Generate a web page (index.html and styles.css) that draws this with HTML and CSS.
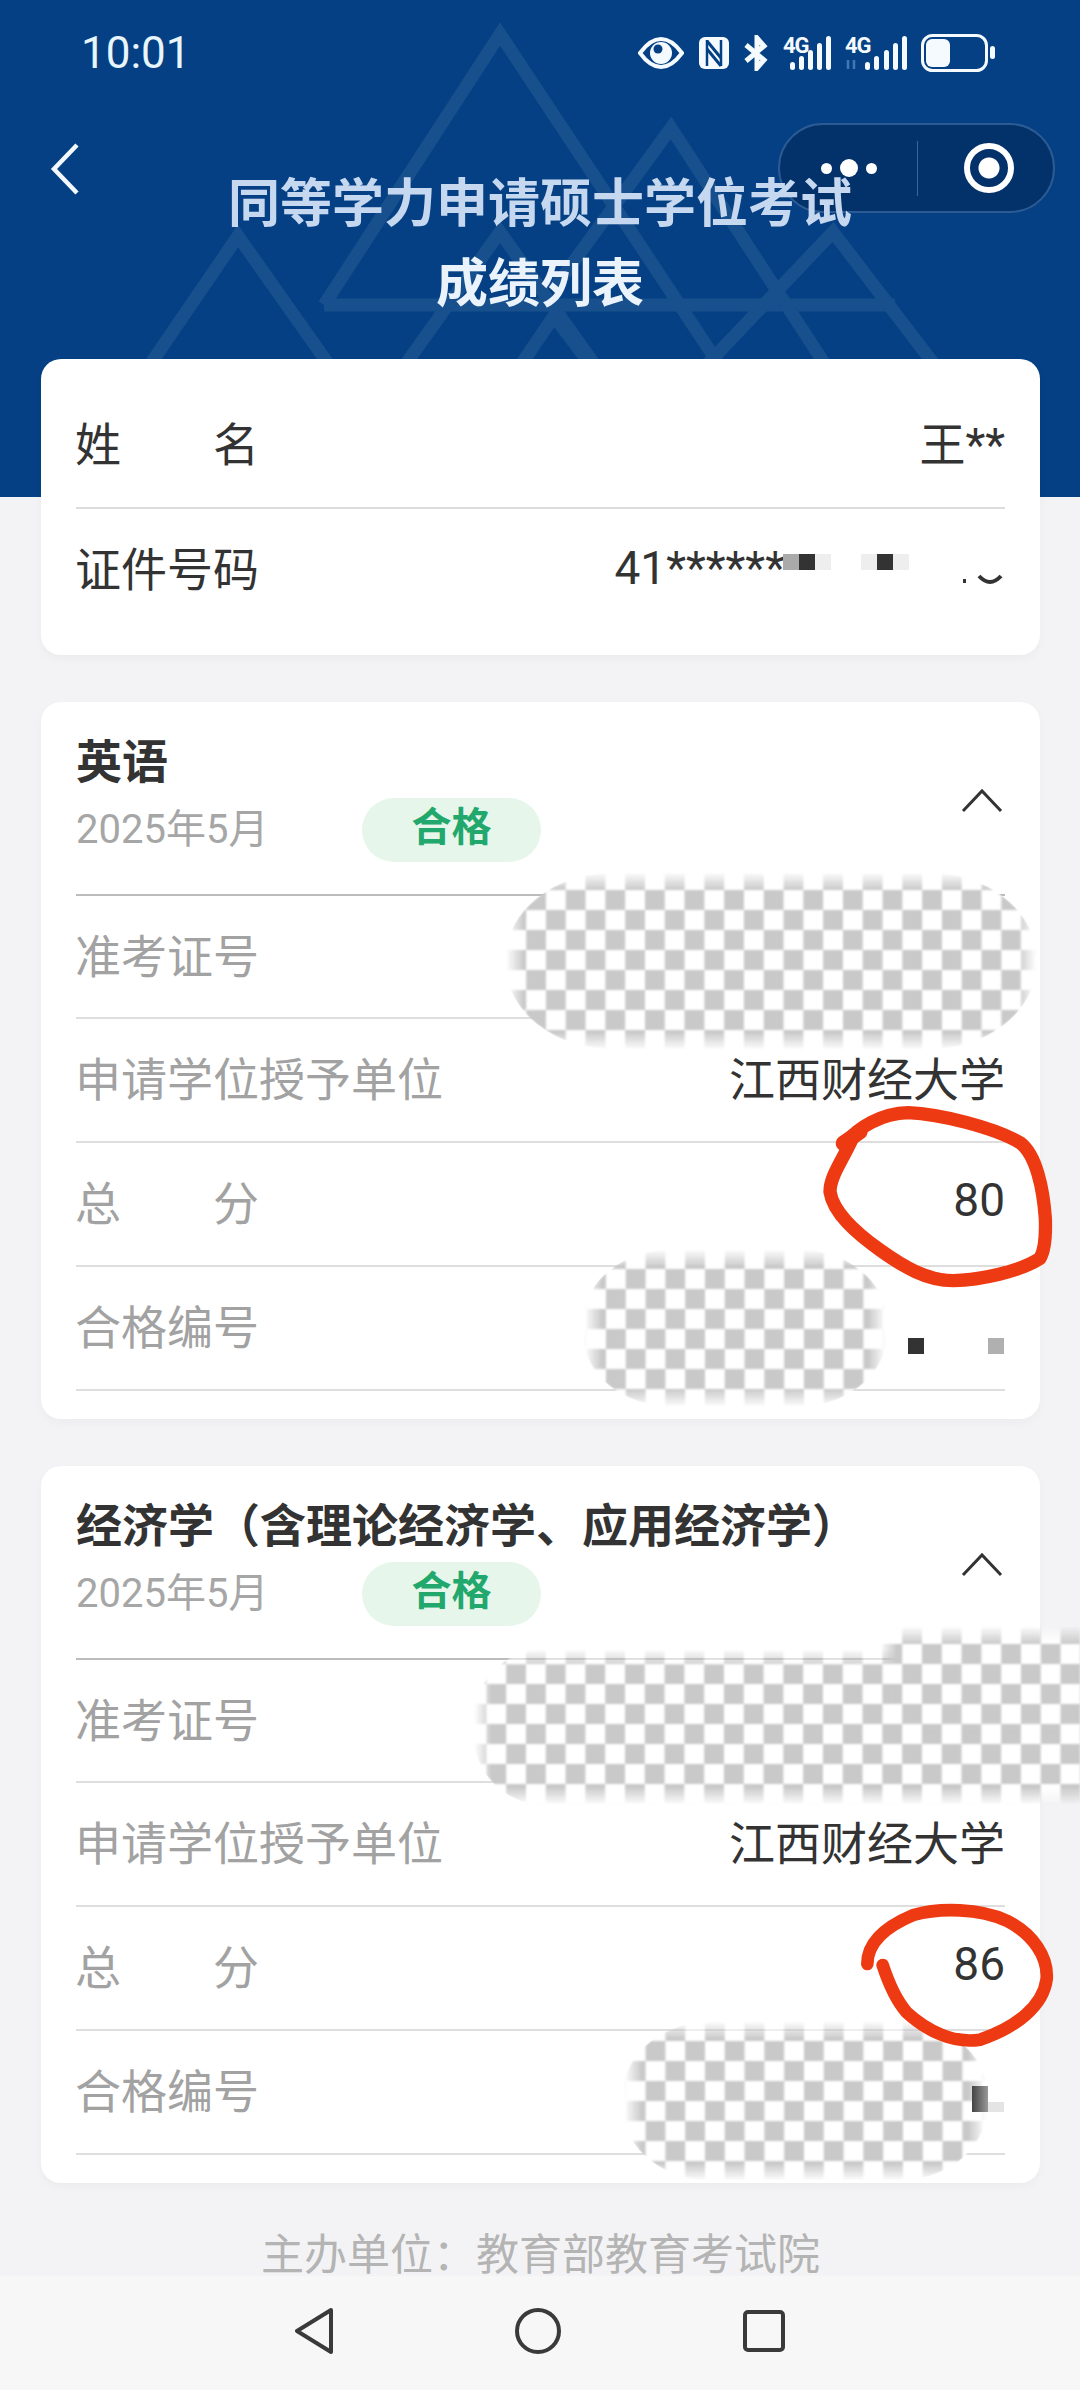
FILE: index.html
```html
<!DOCTYPE html>
<html lang="zh-CN">
<head>
    <meta charset="UTF-8">
    <meta name="viewport" content="width=device-width, initial-scale=1.0">
    <title>成绩列表</title>
    <link rel="stylesheet" href="styles.css">
</head>
<body>
    <div class="page">
        <header class="banner">
            <svg class="banner-lines" viewBox="0 0 1080 497" fill="none" stroke="#17508c" stroke-width="13">
                <path d="M324 305 L500 34 L724 372"/>
                <path d="M324 305 H895"/>
                <path d="M553 290 L671 128 L830 372"/>
                <path d="M145 372 L238 236 L334 372"/>
                <path d="M400 372 L500 232 L600 372"/>
                <path d="M516 372 L554 316 L596 372"/>
                <path d="M700 372 L833 232 L940 372"/>
            </svg>
            <div class="status-bar">
                <span class="clock">10:01</span>
                <div class="status-icons">
                    <svg width="46" height="32" viewBox="0 0 46 32">
                        <path d="M2 16 C10 5 17 2 23 2 C29 2 36 5 44 16 C36 27 29 30 23 30 C17 30 10 27 2 16 Z" fill="none" stroke="#f4fafd" stroke-width="4"/>
                        <circle cx="23" cy="16" r="11" fill="#f4fafd"/>
                        <circle cx="20" cy="12" r="4.500" fill="#044083"/>
                    </svg>
                    <svg width="32" height="34" viewBox="0 0 32 34">
                        <rect x="1" y="1" width="30" height="32" rx="6" fill="#f4fafd"/>
                        <path d="M9 4 V30 M23 4 V30" stroke="#044083" stroke-width="2.500"/>
                        <path d="M9 5 L23 22 M9 13 L23 30" stroke="#044083" stroke-width="3"/>
                    </svg>
                    <svg width="25" height="36" viewBox="0 0 25 36" fill="none" stroke="#f4fafd" stroke-width="5">
                        <path d="M2 10 L20 25 L13 33 V3 L20 11 L2 26"/>
                    </svg>
                    <svg class="signal" width="48" height="34" viewBox="0 0 48 34">
                        <text x="0" y="17" class="signal-label">4G</text>
                        <g fill="#f4fafd">
                            <rect x="7" y="26" width="5" height="8" rx="2.500"/>
                            <rect x="16" y="20" width="5" height="14" rx="2.500"/>
                            <rect x="25" y="14" width="5" height="20" rx="2.500"/>
                            <rect x="34" y="7" width="5" height="27" rx="2.500"/>
                            <rect x="43" y="0" width="5" height="34" rx="2.500"/>
                        </g>
                    </svg>
                    <svg class="signal" width="62" height="34" viewBox="0 0 62 34">
                        <text x="0" y="17" class="signal-label">4G</text>
                        <path d="M3 33 V24 M9 24 V33" stroke="#3f78b5" stroke-width="2.500"/>
                        <g fill="#f4fafd">
                            <rect x="20" y="26" width="5" height="8" rx="2.500"/>
                            <rect x="29" y="20" width="5" height="14" rx="2.500"/>
                            <rect x="39" y="14" width="5" height="20" rx="2.500"/>
                            <rect x="48" y="7" width="5" height="27" rx="2.500"/>
                            <rect x="57" y="0" width="5" height="34" rx="2.500"/>
                        </g>
                    </svg>
                    <svg width="75" height="38" viewBox="0 0 75 38">
                        <rect x="1.500" y="1.500" width="64" height="35" rx="10" fill="none" stroke="#f4fafd" stroke-width="3"/>
                        <rect x="5" y="5" width="24" height="28" rx="6" fill="#f4fafd"/>
                        <rect x="69" y="12" width="5" height="13" rx="2.500" fill="#f4fafd"/>
                    </svg>
                </div>
            </div>
            <div class="nav-bar">
                <svg class="back" width="30" height="52" viewBox="0 0 30 52" fill="none" stroke="#f2f8fc" stroke-width="4.500">
                    <path d="M27 2 L4 26 L27 50"/>
                </svg>
                <div class="capsule">
                    <div class="capsule-dots"><i></i><b></b><i></i></div>
                    <div class="capsule-target"></div>
                </div>
            </div>
            <h1 class="page-title">
                <span class="title-main">同等学力申请硕士学位考试</span>
                <span class="title-sub">成绩列表</span>
            </h1>
        </header>

        <main class="content">
            <section class="card card-person">
                <div class="row">
                    <span class="label label-wide">姓名</span>
                    <span class="value">王**</span>
                </div>
                <div class="row">
                    <span class="label">证件号码</span>
                    <span class="value id-value">
                        41******
                        <span class="id-blocks">
                            <i class="bl-mid"></i><i class="bl-dark"></i><i class="bl-pale"></i>
                            <i class="bl-gap"></i>
                            <i class="bl-pale"></i><i class="bl-dark"></i><i class="bl-pale"></i>
                        </span>
                        <svg width="44" height="30" viewBox="0 0 44 30" fill="none" stroke="#333">
                            <path d="M2 26 h3" stroke-width="4"/>
                            <path d="M18 21 Q29 33 40 21" stroke-width="4"/>
                        </svg>
                    </span>
                </div>
            </section>

            <section class="card card-score">
                <div class="score-head">
                    <div>
                        <h2 class="subject">英语</h2>
                        <div class="meta">
                            <span class="date">2025年5月</span>
                            <span class="pill">合格</span>
                        </div>
                    </div>
                    <svg class="chevron" width="42" height="25" viewBox="0 0 42 25" fill="none" stroke="#333" stroke-width="3">
                        <path d="M2 23 L21 3 L40 23"/>
                    </svg>
                </div>
                <div class="row muted first"><span class="label">准考证号</span></div>
                <div class="row muted"><span class="label">申请学位授予单位</span><span class="value">江西财经大学</span></div>
                <div class="row muted"><span class="label label-wide">总分</span><span class="value">80</span></div>
                <div class="row muted"><span class="label">合格编号</span></div>

                <div class="mosaic m1"></div>
                <div class="mosaic m2"></div>
                <i class="speck speck-dark s1"></i>
                <i class="speck speck-gray s2"></i>
                <svg class="ink ink1" viewBox="0 0 900 930" fill="none" stroke="#ee3a12" stroke-width="40" stroke-linecap="round" stroke-linejoin="round">
                    <path d="M200 155 C235 115 300 70 385 68 C480 72 640 112 720 158 C770 195 790 300 796 385 C798 440 795 480 780 505 C720 545 600 570 520 572 C440 572 370 530 300 480 C230 430 160 370 150 305 C150 260 185 215 215 150"/>
                    <path d="M190 160 L240 125" stroke-width="46"/>
                </svg>
            </section>

            <section class="card card-score">
                <div class="score-head">
                    <div>
                        <h2 class="subject">经济学（含理论经济学、应用经济学）</h2>
                        <div class="meta">
                            <span class="date">2025年5月</span>
                            <span class="pill">合格</span>
                        </div>
                    </div>
                    <svg class="chevron" width="42" height="25" viewBox="0 0 42 25" fill="none" stroke="#333" stroke-width="3">
                        <path d="M2 23 L21 3 L40 23"/>
                    </svg>
                </div>
                <div class="row muted first"><span class="label">准考证号</span></div>
                <div class="row muted"><span class="label">申请学位授予单位</span><span class="value">江西财经大学</span></div>
                <div class="row muted"><span class="label label-wide">总分</span><span class="value">86</span></div>
                <div class="row muted"><span class="label">合格编号</span></div>

                <div class="mosaic m3"></div>
                <div class="mosaic m3-top"></div>
                <div class="mosaic m4"></div>
                <i class="speck speck-fade s3"></i>
                <i class="speck speck-pale s4"></i>
                <svg class="ink ink2" viewBox="0 0 900 930" fill="none" stroke="#ee3a12" stroke-width="38" stroke-linecap="round" stroke-linejoin="round">
                    <path d="M262 255 C262 200 300 150 400 108 C480 85 600 88 680 125 C760 165 805 235 800 300 C790 380 710 445 600 482 C520 495 440 455 380 400 C345 360 325 310 308 258"/>
                </svg>
            </section>

            <footer class="sponsor">主办单位：教育部教育考试院</footer>
        </main>

        <nav class="system-nav">
            <svg width="40" height="48" viewBox="0 0 40 48" fill="none" stroke="#3a3a3a" stroke-width="4" stroke-linejoin="round">
                <path d="M36 3 L2 24 L36 45 Z"/>
            </svg>
            <svg width="46" height="46" viewBox="0 0 46 46" fill="none" stroke="#3a3a3a" stroke-width="4">
                <circle cx="23" cy="23" r="21"/>
            </svg>
            <svg class="nav-square" width="42" height="42" viewBox="0 0 42 42" fill="none" stroke="#3a3a3a" stroke-width="4">
                <rect x="2" y="2" width="38" height="38" rx="3"/>
            </svg>
        </nav>
    </div>
</body>
</html>
```

FILE: styles.css
```css
* {
    box-sizing: border-box;
}
body {
    margin: 0;
    padding: 0;
    font-family: Roboto, "Noto Sans CJK SC", sans-serif;
    color: #333;
    background-color: #f3f3f5;
}
.page {
    position: relative;
    width: 1080px;
    height: 2390px;
    overflow: hidden;
}
.banner {
    position: relative;
    height: 497px;
    background-color: #044083;
}
.banner-lines {
    position: absolute;
    top: 0;
    left: 0;
    width: 1080px;
    height: 497px;
}
.status-bar {
    position: relative;
    display: flex;
    justify-content: space-between;
    align-items: center;
    height: 106px;
    padding: 0 84px 0 81px;
}
.clock {
    font-size: 44px;
    color: #e8f5fb;
}
.status-icons {
    display: flex;
    align-items: center;
    gap: 14px;
}
.signal {
    overflow: visible;
}
.signal-label {
    font-family: Roboto, sans-serif;
    font-size: 22px;
    font-weight: 700;
    letter-spacing: -1px;
    fill: #f4fafd;
}
.nav-bar {
    position: relative;
    display: flex;
    justify-content: space-between;
    align-items: center;
    height: 90px;
    margin-top: 17px;
    padding: 0 25px 0 50px;
}
.back {
    margin-top: 2px;
}
.capsule {
    display: flex;
    align-items: center;
    width: 277px;
    height: 90px;
    background-color: #03316a;
    border: 2px solid #2c5b93;
    border-radius: 45px;
}
.capsule-dots {
    display: flex;
    justify-content: center;
    align-items: center;
    gap: 8px;
    width: 138px;
    height: 55px;
    border-right: 1px solid #3a669c;
}
.capsule-dots i {
    width: 11px;
    height: 11px;
    border-radius: 50%;
    background-color: #fff;
}
.capsule-dots b {
    width: 18px;
    height: 18px;
    border-radius: 50%;
    background-color: #fff;
}
.capsule-target {
    width: 50px;
    height: 50px;
    margin-left: 46px;
    border: 6px solid #fff;
    border-radius: 50%;
    background: radial-gradient(circle, #fff 0 10px, transparent 11px);
}
.page-title {
    position: absolute;
    top: 165px;
    left: 0;
    width: 100%;
    margin: 0;
    text-align: center;
    font-size: 52px;
    font-weight: 700;
    line-height: 80px;
}
.title-main {
    display: block;
    color: #c6d8f0;
}
.title-sub {
    display: block;
    color: #eaf3fb;
}
.content {
    position: relative;
    margin-top: -138px;
    padding: 0 40px 0 41px;
}
.card {
    position: relative;
    margin-bottom: 47px;
    padding: 0 35px;
    background-color: #fff;
    border-radius: 20px;
    box-shadow: 0 4px 10px rgba(0, 0, 0, 0.03);
}
.card-person {
    height: 296px;
    padding-top: 24px;
}
.card-person .row + .row {
    border-top: 2px solid #dcdcdc;
}
.card-score {
    height: 717px;
}
.row {
    display: flex;
    justify-content: space-between;
    align-items: center;
    height: 124px;
    font-size: 46px;
}
.row .label {
    margin-top: -8px;
    margin-left: -1px;
}
.row .value {
    margin-top: -8px;
    color: #333;
}
.label-wide {
    width: 184px;
    text-align-last: justify;
}
.muted {
    color: #a2a2a2;
    border-bottom: 2px solid #dedede;
}
.muted.first {
    height: 125px;
    border-top: 2px solid #bcbcbc;
}
.row .id-value {
    display: flex;
    align-items: center;
    margin-top: -4px;
}
.id-blocks {
    display: flex;
    align-items: center;
    height: 16px;
    margin: -12px 0 0 -2px;
}
.id-blocks i {
    width: 16px;
    height: 16px;
}
.id-blocks .bl-gap {
    width: 30px;
}
.bl-dark {
    background-color: #333;
}
.bl-mid {
    background-color: #aaa;
}
.bl-pale {
    background-color: #eee;
}
.id-blocks + svg {
    margin-top: 4px;
    margin-left: 52px;
}
.score-head {
    display: flex;
    justify-content: space-between;
    align-items: flex-start;
    height: 192px;
    padding-top: 30px;
}
.subject {
    margin: 0;
    font-size: 46px;
    font-weight: 700;
    line-height: 60px;
    color: #333;
    white-space: nowrap;
}
.meta {
    display: flex;
    align-items: center;
    margin-top: 6px;
}
.date {
    width: 286px;
    margin-top: -8px;
    font-size: 40px;
    color: #a6a6a6;
}
.pill {
    width: 179px;
    height: 64px;
    text-align: center;
    font-size: 40px;
    font-weight: 700;
    line-height: 60px;
    color: #22a86c;
    background-color: #e7f6ea;
    border-radius: 32px;
}
.chevron {
    flex: none;
    margin: 56px 2px 0 0;
}
.mosaic {
    position: absolute;
    background-image: repeating-conic-gradient(#c9c9c9 0 25%, #fff 0 50%);
    background-size: 39.6px 40px;
    filter: blur(1px);
    -webkit-mask-image: linear-gradient(to right, transparent 0, #000 18px, #000 calc(100% - 18px), transparent 100%), linear-gradient(to bottom, transparent 0, #000 18px, #000 calc(100% - 18px), transparent 100%);
    -webkit-mask-composite: source-in;
    mask-image: linear-gradient(to right, transparent 0, #000 18px, #000 calc(100% - 18px), transparent 100%), linear-gradient(to bottom, transparent 0, #000 18px, #000 calc(100% - 18px), transparent 100%);
    mask-composite: intersect;
}
.m1 {
    left: 465px;
    top: 170px;
    width: 530px;
    height: 178px;
    border-radius: 110px / 85px;
    background-position: 20.2px -2px;
}
.m2 {
    left: 543px;
    top: 547px;
    width: 302px;
    height: 158px;
    border-radius: 90px / 70px;
    background-position: 2.2px 0;
}
.m3 {
    left: 433px;
    top: 183px;
    width: 666px;
    height: 156px;
    border-radius: 70px;
    background-position: 32.2px 35px;
}
.m3-top {
    left: 838px;
    top: 160px;
    width: 261px;
    height: 110px;
    border-radius: 30px;
    background-position: 23.2px 18px;
}
.m4 {
    left: 583px;
    top: 555px;
    width: 362px;
    height: 160px;
    border-radius: 90px / 70px;
    background-position: 1.8px 20px;
}
.speck {
    position: absolute;
    width: 16px;
    height: 16px;
}
.speck-dark {
    background-color: #333;
}
.speck-gray {
    background-color: #b0b0b0;
}
.speck-fade {
    height: 26px;
    background: linear-gradient(to right, #444, #999);
}
.speck-pale {
    height: 10px;
    background-color: #e4e4e4;
}
.s1 {
    left: 867px;
    top: 636px;
}
.s2 {
    left: 947px;
    top: 636px;
}
.s3 {
    left: 931px;
    top: 620px;
}
.s4 {
    left: 947px;
    top: 636px;
}
.ink {
    position: absolute;
    width: 300px;
    height: 310px;
}
.ink1 {
    left: 739px;
    top: 388px;
}
.ink2 {
    left: 739px;
    top: 413px;
}
.sponsor {
    margin-top: 2px;
    text-align: center;
    font-size: 43px;
    color: #b4b4b4;
    line-height: 50px;
}
.system-nav {
    position: absolute;
    left: 0;
    bottom: 0;
    display: flex;
    justify-content: center;
    align-items: center;
    gap: 180px;
    width: 100%;
    height: 114px;
    padding-bottom: 4px;
    background-color: #f7f7f7;
}
.nav-square {
    margin-left: 2px;
}
```
